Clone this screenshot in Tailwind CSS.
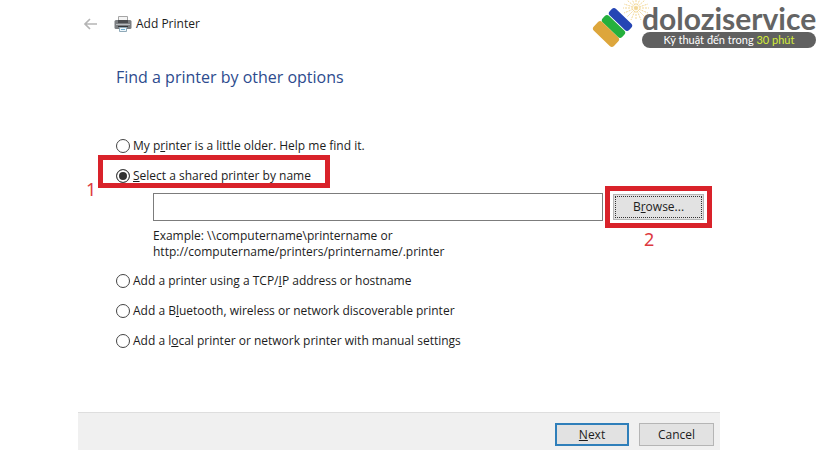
<!DOCTYPE html>
<html lang="en">
<head>
    <meta charset="UTF-8">
    <meta name="viewport" content="width=device-width, initial-scale=1.0">
    <title>Add Printer</title>
    <script src="https://cdn.jsdelivr.net/npm/@tailwindcss/browser@4"></script>
</head>
<body class="bg-white font-['Open_Sans','Noto_Sans',sans-serif] text-xs text-[#1c1c1c]">
    <div class="relative flex min-h-screen flex-col pl-[78px] pr-[100px]">
        <!-- Brand -->
        <div class="absolute top-0 right-1 flex items-start">
            <svg class="h-[52px] w-[68px]" viewBox="0 0 68 52" aria-hidden="true">
                <g stroke="#f3d795" stroke-width="1" fill="none" stroke-dasharray="2 1">
                    <path d="M54 8V-3M54 8V20M54 8H41M54 8H67M54 8L45 0M54 8L63 0M54 8L45 17M54 8L63 17M54 8L42 4M54 8L66 4M54 8L42 13M54 8L66 13M54 8L49-3M54 8L59-3M54 8L49 20M54 8L59 20"/>
                </g>
                <rect x="25" y="15" width="27" height="9" rx="3" fill="#2545b4" transform="rotate(44 38.5 19.5)"/>
                <rect x="18" y="22" width="27" height="9" rx="3" fill="#25b03c" transform="rotate(44 31.5 26.5)"/>
                <rect x="10" y="28" width="28" height="12" rx="3" fill="#dda63c" transform="rotate(44 24 34)"/>
            </svg>
            <div class="-ml-2 w-[174px] pt-1">
                <div class="font-['Lato',sans-serif] text-[30px] leading-7 font-bold text-[#646464]">doloziservice</div>
                <div class="h-4 rounded-full bg-[#606060] text-center font-['Lato','Open_Sans',sans-serif] text-[11px] leading-4 text-white">Kỹ thuật đến trong <span class="text-[#d5ed38]">30 phút</span></div>
            </div>
        </div>

        <header class="flex h-12 items-center pl-[5px]">
            <button type="button" aria-label="Back" class="mr-4">
                <svg class="h-4 w-[15px]" viewBox="0 0 15 16" fill="none" stroke="#b5b5b5" stroke-width="1.7"><path d="M14 8H2M7 3L2 8L7 13"/></svg>
            </button>
            <svg class="mr-1 h-[18px] w-[18px]" viewBox="0 0 18 18" aria-hidden="true">
                <path d="M4.5 6V1.5H13.5V6" fill="#f4f4f4" stroke="#a5a5a5"/>
                <rect x="0.5" y="5" width="17" height="9" rx="1.5" fill="#7b7e81"/>
                <path d="M4 5H14V8H4Z" fill="#4a4c4f"/>
                <path d="M2 9H16V10H2Z" fill="#b9bcbf"/>
                <path d="M4 11H14V12H4Z" fill="#35373a"/>
                <path d="M5.5 12.5H12.5V16.5H5.5Z" fill="#edf6fb" stroke="#8fa9b8"/>
                <path d="M7 14.5H11" stroke="#6fb0d2"/>
            </svg>
            <span class="text-xs">Add Printer</span>
        </header>

        <main class="flex-1 pl-[38px]">
            <h1 class="pt-[17px] text-base leading-6 text-[#2d4b8e]">Find a printer by other options</h1>

            <form id="find-printer" class="pt-[42px]">
                <label class="flex h-[30px] items-center gap-[3px]">
                    <input type="radio" name="option" class="size-[14px] appearance-none rounded-full border border-[#444] bg-white checked:bg-[#333] checked:shadow-[inset_0_0_0_2px_#fff]">
                    <span>My p<u>r</u>inter is a little older. Help me find it.</span>
                </label>
                <div class="relative w-fit">
                    <label class="flex h-[30px] items-center gap-[3px]">
                        <input type="radio" name="option" checked class="size-[14px] appearance-none rounded-full border border-[#444] bg-white checked:bg-[#333] checked:shadow-[inset_0_0_0_2px_#fff]">
                        <span><u>S</u>elect a shared printer by name</span>
                    </label>
                    <div class="pointer-events-none absolute -top-[6px] -left-[18px] h-[33px] w-[232px] border-[5px] border-[#d9222a]"></div>
                    <span class="absolute top-4 -left-[30px] font-['Noto_Sans',sans-serif] text-lg leading-6 text-[#dd3940]">1</span>
                </div>

                <div class="flex items-center pt-[2px] pl-[37px]">
                    <input type="text" aria-label="Shared printer name" class="h-7 min-w-0 flex-1 border border-[#7c7c7c] bg-white px-1">
                    <div class="relative mr-[16px] ml-[10px]">
                        <button type="button" class="h-[26px] w-[91px] border border-[#b5b5b5] bg-[#e2e2e2] p-px"><span class="flex h-full items-center justify-center border border-dotted border-[#333]"><span>B<u>r</u>owse...</span></span></button>
                        <div class="pointer-events-none absolute -inset-2 border-[5px] border-[#d9222a]"></div>
                        <span class="absolute top-[33px] left-[31px] font-['Noto_Sans',sans-serif] text-lg leading-6 text-[#dd3940]">2</span>
                    </div>
                </div>
                <p class="pt-[7px] pb-[6px] pl-[37px] leading-4">Example: \\computername\printername or<br>http://computername/printers/printername/.printer</p>

                <label class="flex h-[30px] items-center gap-[3px]">
                    <input type="radio" name="option" class="size-[14px] appearance-none rounded-full border border-[#444] bg-white checked:bg-[#333] checked:shadow-[inset_0_0_0_2px_#fff]">
                    <span>Add a printer using a TCP/<u>I</u>P address or hostname</span>
                </label>
                <label class="flex h-[30px] items-center gap-[3px]">
                    <input type="radio" name="option" class="size-[14px] appearance-none rounded-full border border-[#444] bg-white checked:bg-[#333] checked:shadow-[inset_0_0_0_2px_#fff]">
                    <span>Add a B<u>l</u>uetooth, wireless or network discoverable printer</span>
                </label>
                <label class="flex h-[30px] items-center gap-[3px]">
                    <input type="radio" name="option" class="size-[14px] appearance-none rounded-full border border-[#444] bg-white checked:bg-[#333] checked:shadow-[inset_0_0_0_2px_#fff]">
                    <span>Add a l<u>o</u>cal printer or network printer with manual settings</span>
                </label>
            </form>
        </main>

        <footer class="flex justify-end gap-[10px] border-t border-[#dedede] bg-[#f0f0f0] pt-[10px] pr-[6px] pb-1">
            <button type="submit" form="find-printer" class="h-[23px] w-[74px] border-2 border-[#2f7fba] bg-[#e2e2e2]"><u>N</u>ext</button>
            <button type="button" class="h-[23px] w-[75px] border border-[#b5b5b5] bg-[#e2e2e2]">Cancel</button>
        </footer>
    </div>
</body>
</html>
